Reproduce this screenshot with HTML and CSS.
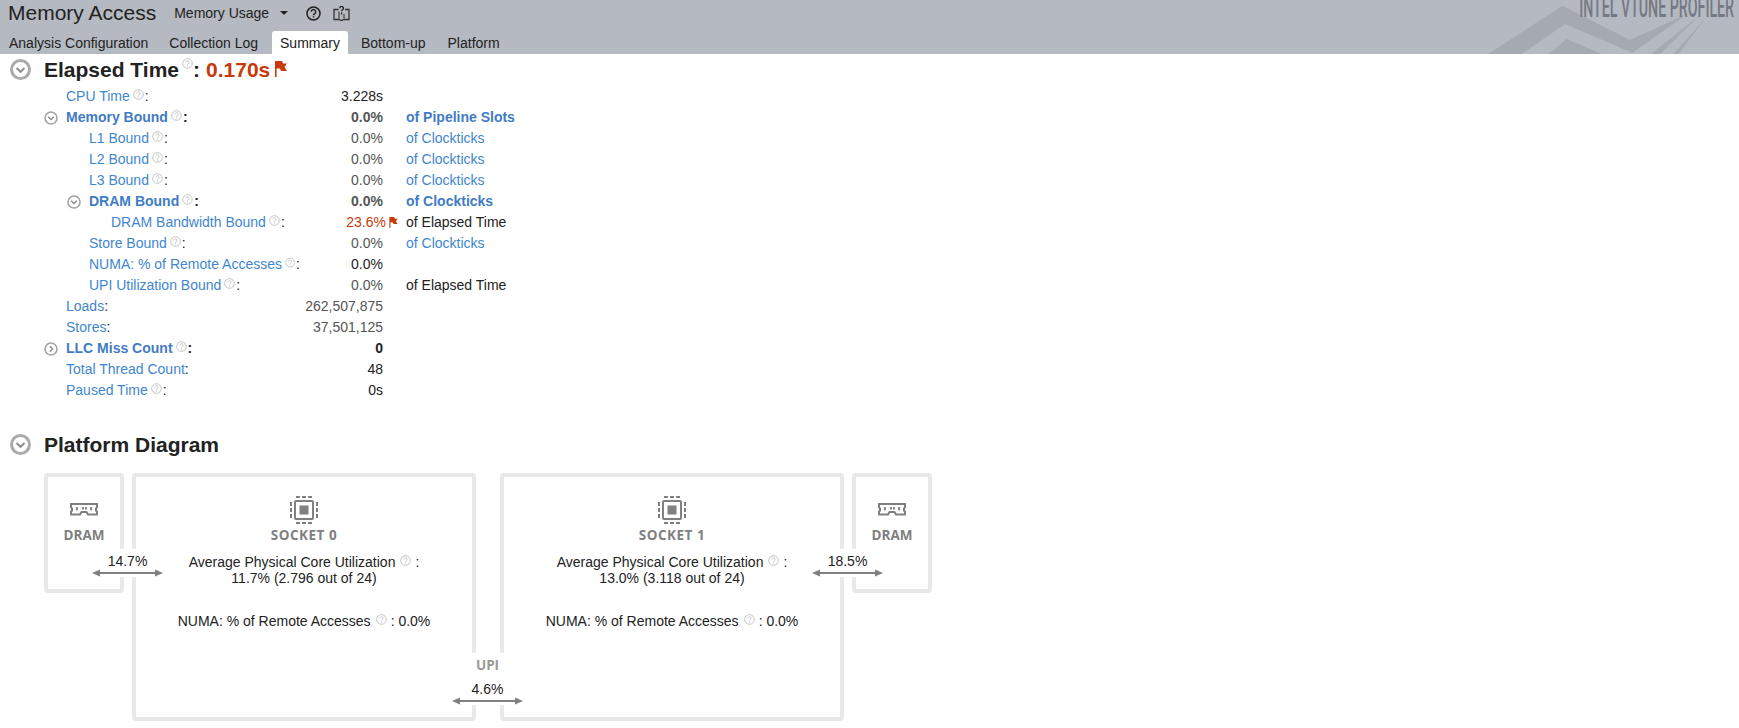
FILE: index.html
```html
<!DOCTYPE html>
<html lang="en">
<head>
  <meta charset="UTF-8" />
  <title>Memory Access - Summary</title>
  <link rel="stylesheet" href="styles.css">
</head>
<body>
  <svg class="defs" width="0" height="0">
    <symbol id="help" viewBox="0 0 11 11">
      <circle cx="5.500" cy="5.500" r="4.800" fill="none" stroke="#bdbdbd" stroke-width="0.9"/>
      <path d="M3.900 4.300a1.600 1.600 0 1 1 2.500 1.300c-.6.400-.9.600-.9 1.200" fill="none" stroke="#bdbdbd" stroke-width="0.9"/>
      <rect x="5" y="7.600" width="1" height="1" fill="#bdbdbd"/>
    </symbol>
    <symbol id="open" viewBox="0 0 21 21">
      <circle cx="10.500" cy="10.500" r="9" fill="none" stroke="#ababab" stroke-width="3"/>
      <path d="M6.500 9l4 3.800 4-3.800" fill="none" stroke="#8f8f8f" stroke-width="2"/>
    </symbol>
    <symbol id="open-small" viewBox="0 0 14 14">
      <circle cx="7" cy="7" r="6" fill="none" stroke="#a3a3a3" stroke-width="1.600"/>
      <path d="M4.200 5.800L7 8.600l2.800-2.800" fill="none" stroke="#8a8a8a" stroke-width="1.400"/>
    </symbol>
    <symbol id="closed-small" viewBox="0 0 14 14">
      <circle cx="7" cy="7" r="6" fill="none" stroke="#a3a3a3" stroke-width="1.600"/>
      <path d="M5.800 4.200L8.600 7l-2.800 2.800" fill="none" stroke="#8a8a8a" stroke-width="1.400"/>
    </symbol>
    <symbol id="flag" viewBox="0 0 12 16">
      <path d="M0 0h1.600v16H0zM1.600 0H7l1 2.500h4L9.500 6l2.500 4H6L5 7.500H1.600z" fill="#c8390b"/>
    </symbol>
    <symbol id="chip" viewBox="0 0 28 28">
      <rect x="5" y="5" width="18" height="18" rx="1" fill="none" stroke="#808080" stroke-width="2"/>
      <rect x="9.500" y="9.500" width="9" height="9" fill="#808080"/>
      <path d="M6 1h4M12 1h4M18 1h4M6 27h4M12 27h4M18 27h4M1 6v4M1 12v4M1 18v4M27 6v4M27 12v4M27 18v4" fill="none" stroke="#808080" stroke-width="2"/>
    </symbol>
    <symbol id="ram" viewBox="0 0 28 13">
      <path d="M1 1h26v3.500l-1 .8v2.400l1 .8V11.500H18l-1.500-2.500h-5L10 11.500H1V8.500l1-.8V5.300l-1-.8z" fill="none" stroke="#808080" stroke-width="2"/>
      <path d="M7 4v3.500M13 4v2.500M16 4v2.500M21 4v3.500" fill="none" stroke="#808080" stroke-width="1.800"/>
    </symbol>
    <symbol id="arrow" viewBox="0 0 71 10">
      <path d="M8 4h55v2H8z" fill="#808080"/>
      <path d="M0 5l8-3.500v7zM71 5l-8-3.500v7z" fill="#808080"/>
    </symbol>
  </svg>

  <header class="topbar">
    <svg class="brand-art" viewBox="0 0 1017 162">
      <path d="M265 162L487 17 690 120 865 40 697 158 495 72 365 162z"/>
      <path d="M445 162L500 117 605 162z"/>
      <path d="M753 162L900 45 780 162z"/>
      <path d="M820 162L920 50 835 162z"/>
    </svg>
    <span class="brand">INTEL VTUNE PROFILER</span>
    <div class="title-row">
      <h1>Memory Access</h1>
      <span class="viewpoint">Memory Usage</span>
      <span class="caret"></span>
      <svg class="top-help" viewBox="0 0 15 15">
        <circle cx="7.500" cy="7.500" r="6.500" fill="none" stroke="#222" stroke-width="1.500"/>
        <path d="M5.300 5.800a2.200 2.200 0 1 1 3.400 1.800c-.8.500-1.200.8-1.200 1.600" fill="none" stroke="#222" stroke-width="1.400"/>
        <rect x="6.800" y="10.200" width="1.400" height="1.400" fill="#222"/>
      </svg>
      <svg class="top-book" viewBox="0 0 17 15">
        <path d="M5.500 3.500H1v10h5l2.500 1 2.500-1h5v-10h-4" fill="none" stroke="#333" stroke-width="1.300"/>
        <path d="M6 5.500v7M11 8v4.500" fill="none" stroke="#333" stroke-width="1.100"/>
        <path d="M6.800 2.200a1.800 1.800 0 1 1 2.800 1.500c-.7.500-1 .8-1 1.500M8.600 6.500v2" fill="none" stroke="#222" stroke-width="1.300"/>
      </svg>
    </div>
    <nav class="tabs">
      <a class="tab first">Analysis Configuration</a>
      <a class="tab">Collection Log</a>
      <a class="tab active">Summary</a>
      <a class="tab">Bottom-up</a>
      <a class="tab">Platform</a>
    </nav>
  </header>

  <section>
    <h2 class="section-head">
      <svg class="toggle-big"><use href="#open"/></svg>
      <span>Elapsed Time</span><svg class="help-big"><use href="#help"/></svg><span class="colon">:</span>
      <span class="alert">0.170s</span><svg class="flag-big"><use href="#flag"/></svg>
    </h2>

    <div class="metrics">
      <div class="row lvl0">
        <div class="name"><a>CPU Time</a><svg class="help"><use href="#help"/></svg>:</div>
        <div class="val dark">3.228s</div>
      </div>
      <div class="row lvl0 strong">
        <div class="name"><svg class="toggle"><use href="#open-small"/></svg><a>Memory Bound</a><svg class="help"><use href="#help"/></svg>:</div>
        <div class="val">0.0%</div>
        <div class="unit link">of Pipeline Slots</div>
      </div>
      <div class="row lvl1">
        <div class="name"><a>L1 Bound</a><svg class="help"><use href="#help"/></svg>:</div>
        <div class="val">0.0%</div>
        <div class="unit link">of Clockticks</div>
      </div>
      <div class="row lvl1">
        <div class="name"><a>L2 Bound</a><svg class="help"><use href="#help"/></svg>:</div>
        <div class="val">0.0%</div>
        <div class="unit link">of Clockticks</div>
      </div>
      <div class="row lvl1">
        <div class="name"><a>L3 Bound</a><svg class="help"><use href="#help"/></svg>:</div>
        <div class="val">0.0%</div>
        <div class="unit link">of Clockticks</div>
      </div>
      <div class="row lvl1 strong">
        <div class="name"><svg class="toggle"><use href="#open-small"/></svg><a>DRAM Bound</a><svg class="help"><use href="#help"/></svg>:</div>
        <div class="val">0.0%</div>
        <div class="unit link">of Clockticks</div>
      </div>
      <div class="row lvl2">
        <div class="name"><a>DRAM Bandwidth Bound</a><svg class="help"><use href="#help"/></svg>:</div>
        <div class="val flagged">23.6%<svg class="flag"><use href="#flag"/></svg></div>
        <div class="unit">of Elapsed Time</div>
      </div>
      <div class="row lvl1">
        <div class="name"><a>Store Bound</a><svg class="help"><use href="#help"/></svg>:</div>
        <div class="val">0.0%</div>
        <div class="unit link">of Clockticks</div>
      </div>
      <div class="row lvl1">
        <div class="name"><a>NUMA: % of Remote Accesses</a><svg class="help"><use href="#help"/></svg>:</div>
        <div class="val dark">0.0%</div>
      </div>
      <div class="row lvl1">
        <div class="name"><a>UPI Utilization Bound</a><svg class="help"><use href="#help"/></svg>:</div>
        <div class="val">0.0%</div>
        <div class="unit">of Elapsed Time</div>
      </div>
      <div class="row lvl0">
        <div class="name"><a>Loads</a>:</div>
        <div class="val">262,507,875</div>
      </div>
      <div class="row lvl0">
        <div class="name"><a>Stores</a>:</div>
        <div class="val">37,501,125</div>
      </div>
      <div class="row lvl0 strong">
        <div class="name"><svg class="toggle"><use href="#closed-small"/></svg><a>LLC Miss Count</a><svg class="help"><use href="#help"/></svg>:</div>
        <div class="val dark">0</div>
      </div>
      <div class="row lvl0">
        <div class="name"><a>Total Thread Count</a>:</div>
        <div class="val dark">48</div>
      </div>
      <div class="row lvl0">
        <div class="name"><a>Paused Time</a><svg class="help"><use href="#help"/></svg>:</div>
        <div class="val dark">0s</div>
      </div>
    </div>
  </section>

  <section class="platform">
    <h2 class="section-head">
      <svg class="toggle-big"><use href="#open"/></svg>
      <span>Platform Diagram</span>
    </h2>

    <div class="diagram">
      <div class="node dram dram-left">
        <svg class="ram-icon"><use href="#ram"/></svg>
        <div class="node-name">DRAM</div>
      </div>
      <div class="node socket socket-0">
        <svg class="chip-icon"><use href="#chip"/></svg>
        <div class="node-name">SOCKET 0</div>
        <div class="util">Average Physical Core Utilization<svg class="help spaced"><use href="#help"/></svg>:<br>11.7% (2.796 out of 24)</div>
        <div class="numa">NUMA: % of Remote Accesses<svg class="help spaced"><use href="#help"/></svg>: 0.0%</div>
      </div>
      <div class="node socket socket-1">
        <svg class="chip-icon"><use href="#chip"/></svg>
        <div class="node-name">SOCKET 1</div>
        <div class="util">Average Physical Core Utilization<svg class="help spaced"><use href="#help"/></svg>:<br>13.0% (3.118 out of 24)</div>
        <div class="numa">NUMA: % of Remote Accesses<svg class="help spaced"><use href="#help"/></svg>: 0.0%</div>
      </div>
      <div class="node dram dram-right">
        <svg class="ram-icon"><use href="#ram"/></svg>
        <div class="node-name">DRAM</div>
      </div>

      <div class="wire wire-left">14.7%<svg class="arrow"><use href="#arrow"/></svg></div>
      <div class="wire wire-right">18.5%<svg class="arrow"><use href="#arrow"/></svg></div>
      <div class="wire wire-upi">
        <div class="upi-name">UPI</div>
        <div class="upi-val">4.6%</div>
        <svg class="arrow"><use href="#arrow"/></svg>
      </div>
    </div>
  </section>
</body>
</html>
```

FILE: styles.css
```css
* {
  box-sizing: border-box;
}

body {
  margin: 0;
  font-family: 'Liberation Sans', Arial, sans-serif;
  font-size: 14px;
  color: #222;
  background: white;
}

.defs {
  position: absolute;
}

/* top bar */
.topbar {
  position: relative;
  height: 54px;
  background: #b5b9c1;
  overflow: hidden;
}

.brand-art {
  position: absolute;
  right: 0;
  top: 0;
  width: 339px;
  height: 54px;
  fill: #a5a9b1;
}

.brand {
  position: absolute;
  right: 5px;
  top: -8px;
  font-family: 'Roboto', sans-serif;
  font-weight: 500;
  font-size: 29px;
  line-height: 30px;
  white-space: nowrap;
  color: #747983;
  transform: scaleX(0.49);
  transform-origin: right top;
}

.title-row {
  position: relative;
  display: flex;
  align-items: center;
  height: 31px;
  padding: 0 0 5px 8px;
}

h1 {
  margin: 0 18px 0 0;
  font-size: 21px;
  font-weight: normal;
}

.caret {
  margin-left: 11px;
  border-top: 4px solid #222;
  border-left: 4px solid transparent;
  border-right: 4px solid transparent;
}

.top-help {
  width: 15px;
  height: 15px;
  margin-left: 18px;
}

.top-book {
  width: 17px;
  height: 15px;
  margin-left: 12px;
}

.tabs {
  position: relative;
  display: flex;
  gap: 6px;
  height: 23px;
}

.tab {
  padding: 0 8px;
  line-height: 25px;
  border-radius: 3px 3px 0 0;
}

.tab.first {
  padding: 0 7px 0 9px;
}

.tab.active {
  margin-right: -1px;
  background: white;
}

/* sections */
.section-head {
  display: flex;
  align-items: center;
  height: 31px;
  margin: 0;
  padding-left: 10px;
  font-size: 21px;
  font-weight: bold;
}

.toggle-big {
  width: 21px;
  height: 21px;
  margin-right: 13px;
}

.help-big {
  width: 11px;
  height: 11px;
  margin: 0 0 13px 3px;
}

.colon {
  margin-right: 6px;
}

.alert {
  color: #c8390b;
}

.flag-big {
  width: 12px;
  height: 16px;
  margin: 0 0 2px 5px;
}

/* metric rows */
.metrics {
  padding-top: 1px;
}

.row {
  display: grid;
  grid-template-columns: 300px 83px auto;
  height: 21px;
  line-height: 21px;
}

.row.lvl0 .name {
  padding-left: 66px;
}

.row.lvl1 .name {
  padding-left: 89px;
}

.row.lvl2 .name {
  padding-left: 111px;
}

.name {
  display: flex;
  align-items: center;
  white-space: nowrap;
}

.name a {
  color: #3f86cf;
}

.help {
  width: 11px;
  height: 11px;
  margin: 0 1px 5px 3px;
}

.toggle {
  width: 14px;
  height: 14px;
  margin: 0 8px 0 -22px;
}

.val {
  text-align: right;
  color: #555;
  white-space: nowrap;
}

.val.dark {
  color: #222;
}

.val.flagged {
  margin-right: -15px;
  color: #c8390b;
}

.flag {
  width: 9px;
  height: 11px;
  margin-left: 3px;
  vertical-align: -1px;
}

.unit {
  margin-left: 23px;
}

.unit.link {
  color: #3f86cf;
}

.strong {
  font-weight: bold;
}

.strong .name a,
.strong .unit.link {
  color: #3f7cc4;
}

/* platform diagram */
.platform {
  margin-top: 28px;
}

.diagram {
  position: relative;
  height: 248px;
  margin: 13px 0 0 44px;
}

.node {
  position: absolute;
  top: 0;
  display: flex;
  flex-direction: column;
  align-items: center;
  border: 4px solid #e8e8e8;
  border-radius: 4px;
  padding-top: 19px;
}

.dram {
  width: 80px;
  height: 120px;
}

.socket {
  width: 344px;
  height: 248px;
  text-align: center;
}

.dram-left { left: 0; }
.socket-0 { left: 88px; }
.socket-1 { left: 456px; }
.dram-right { left: 808px; }

.chip-icon {
  width: 28px;
  height: 28px;
}

.ram-icon {
  width: 28px;
  height: 13px;
  margin: 7px 0 8px;
}

.node-name {
  margin-top: 2px;
  font-family: 'Open Sans', sans-serif;
  font-weight: 700;
  font-size: 13.500px;
  line-height: 18px;
  color: #808080;
}

.socket .node-name {
  letter-spacing: 0.5px;
}

.util {
  margin-top: 10px;
  line-height: 16px;
}

.numa {
  margin-top: 27px;
  line-height: 16px;
}

.help.spaced {
  margin: 0 4px 0 5px;
  vertical-align: 1px;
}

.wire {
  position: absolute;
  width: 71px;
  background: white;
  text-align: center;
}

.wire-left,
.wire-right {
  top: 76px;
  height: 28px;
  padding-top: 4px;
  line-height: 16px;
}

.wire-left { left: 48px; }
.wire-right { left: 768px; }

.wire-upi {
  left: 408px;
  top: 180px;
  height: 52px;
  padding-top: 4px;
  line-height: 16px;
}

.upi-name {
  font-family: 'Open Sans', sans-serif;
  font-weight: 700;
  font-size: 13.500px;
  color: #9a9a9a;
}

.upi-val {
  margin-top: 8px;
}

.arrow {
  position: absolute;
  left: 0;
  bottom: -1px;
  width: 71px;
  height: 10px;
}
```
